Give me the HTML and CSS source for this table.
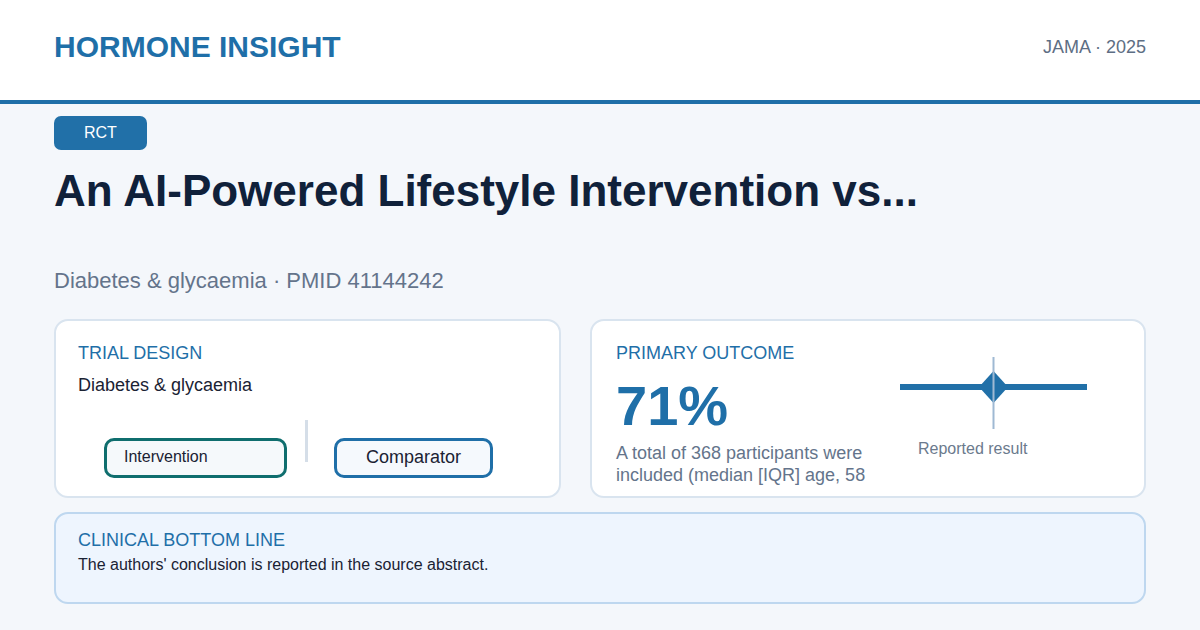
FILE: index.html
```html
<!DOCTYPE html>
<html lang="en">
<head>
<meta charset="utf-8">
<title>Hormone Insight</title>
<link rel="stylesheet" href="styles.css">
</head>
<body>
<header class="top">
  <div class="brand">HORMONE INSIGHT</div>
  <div class="source">JAMA · 2025</div>
</header>
<main class="main">
  <span class="badge">RCT</span>
  <h1 class="title">An AI-Powered Lifestyle Intervention vs...</h1>
  <p class="subtitle">Diabetes &amp; glycaemia · PMID 41144242</p>
  <section class="cards">
    <div class="card">
      <div class="label">TRIAL DESIGN</div>
      <div class="design">Diabetes &amp; glycaemia</div>
      <div class="arms">
        <div class="arm arm-int">Intervention</div>
        <div class="divider"></div>
        <div class="arm arm-comp">Comparator</div>
      </div>
    </div>
    <div class="card card-outcome">
      <div class="outcome-main">
        <div class="label">PRIMARY OUTCOME</div>
        <div class="big">71%</div>
        <div class="outcome-text">A total of 368 participants were included (median [IQR] age, 58</div>
      </div>
      <div class="outcome-plot">
        <svg class="plot" width="254" height="80" viewBox="0 0 254 80">
          <rect x="31" y="31" width="187" height="6" fill="#2170a8"/>
          <polygon points="124.5,18 139,34 124.5,50 110,34" fill="#2170a8"/>
          <rect x="123.5" y="4" width="2" height="72" fill="#9fb9d3"/>
        </svg>
        <div class="plot-caption">Reported result</div>
      </div>
    </div>
  </section>
  <section class="bottom">
    <div class="label">CLINICAL BOTTOM LINE</div>
    <div class="bottom-text">The authors' conclusion is reported in the source abstract.</div>
  </section>
</main>
</body>
</html>
```

FILE: styles.css
```css
* { box-sizing: border-box; }
html, body {
  margin: 0;
  padding: 0;
}
body {
  width: 1200px;
  height: 630px;
  overflow: hidden;
  background: #f4f7fb;
  font-family: "Liberation Sans", Arial, sans-serif;
  color: #15233a;
}
.top {
  box-sizing: content-box;
  height: 94px;
  padding: 0 54px 6px;
  background: #ffffff;
  border-bottom: 4px solid #1f6fa8;
  display: flex;
  align-items: center;
  justify-content: space-between;
}
.brand {
  font-size: 30px;
  font-weight: 700;
  color: #1f6fa8;
}
.source {
  font-size: 18px;
  color: #5d6e84;
}
.main {
  padding: 12px 54px 0;
}
.badge {
  display: inline-block;
  height: 34px;
  line-height: 34px;
  padding: 0 30px;
  background: #2170a8;
  color: #ffffff;
  font-size: 16px;
  border-radius: 7px;
  vertical-align: top;
}
.title {
  margin: 15px 0 0;
  font-size: 44px;
  font-weight: 700;
  line-height: 1.2;
  height: 102.6px;
  overflow: hidden;
  color: #10213a;
}
.subtitle {
  margin: 0;
  font-size: 22px;
  color: #64748b;
}
.cards {
  margin-top: 25px;
  display: grid;
  grid-template-columns: 507fr 556fr;
  gap: 29px;
}
.card {
  height: 179px;
  background: #ffffff;
  border: 2px solid #d9e4ef;
  border-radius: 14px;
  padding: 22px 22px 0;
  overflow: hidden;
}
.label {
  font-size: 18px;
  color: #1f6fa8;
  margin-bottom: 11px;
}
.design {
  font-size: 18px;
  color: #1a2233;
}
.arms {
  margin-top: 24px;
  padding-left: 26px;
  display: flex;
  align-items: flex-start;
}
.arm {
  height: 40px;
  margin-top: 18px;
  border-radius: 10px;
  display: flex;
  align-items: center;
  color: #1a2233;
}
.arm-int {
  width: 183px;
  border: 3px solid #0f6e6e;
  background: #f5f9fb;
  padding-left: 17px;
  padding-bottom: 1px;
  font-size: 16px;
}
.arm-comp {
  width: 159px;
  border: 3px solid #1f6fa8;
  background: #f5f9fd;
  justify-content: center;
  font-size: 18px;
}
.divider {
  width: 3px;
  height: 42px;
  background: #d5dee8;
  margin: 0 26px 0 18px;
}
.card-outcome {
  display: grid;
  grid-template-columns: 253px 1fr;
  padding-left: 24px;
}
.outcome-main .label {
  margin-bottom: 14px;
}
.big {
  font-size: 56px;
  font-weight: 700;
  line-height: 1;
  color: #1f6fa8;
}
.outcome-text {
  margin-top: 8px;
  font-size: 18px;
  line-height: 22.5px;
  color: #64748b;
}
.outcome-plot {
  padding-top: 10px;
}
.plot {
  display: block;
}
.plot-caption {
  margin-top: 7px;
  margin-left: 49px;
  font-size: 16px;
  color: #6b7a8d;
}
.bottom {
  margin-top: 14px;
  height: 92px;
  background: #eef5fe;
  border: 2px solid #bed7ef;
  border-radius: 14px;
  padding: 16px 22px 0;
}
.bottom .label {
  margin-bottom: 5px;
}
.bottom-text {
  font-size: 16px;
  color: #1a2233;
}
```
